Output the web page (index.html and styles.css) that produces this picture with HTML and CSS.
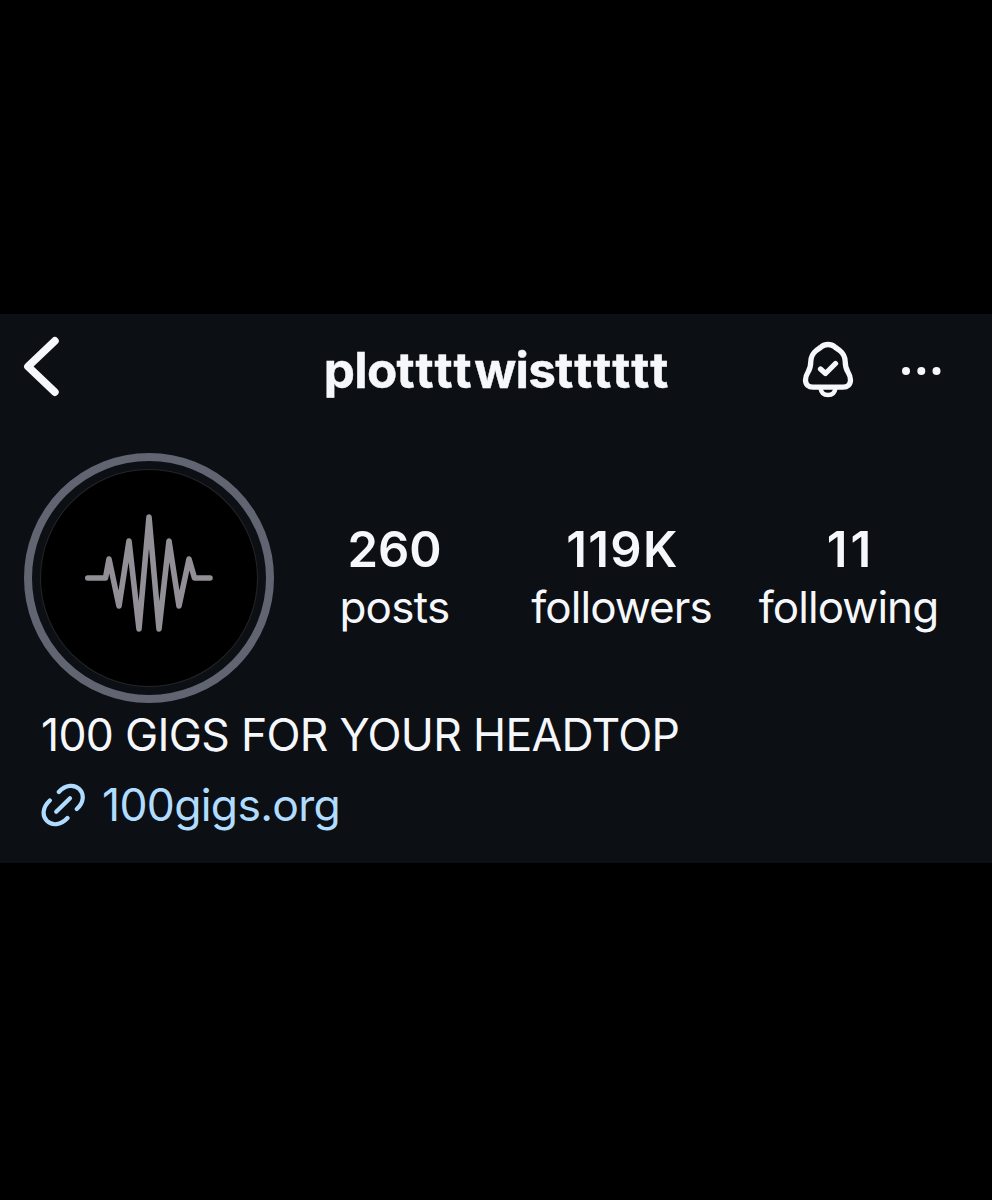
FILE: index.html
```html
<!DOCTYPE html>
<html lang="en">
<head>
<meta charset="utf-8">
<title>plottttwistttttt</title>
<link rel="stylesheet" href="styles.css">
</head>
<body>
<main class="profile">
  <header class="topbar">
    <svg class="back" width="60" height="70" viewBox="0 0 60 70" fill="none" stroke="currentColor" stroke-width="7.800" stroke-linecap="round" stroke-linejoin="round"><path d="M54.800 10 28 35.500 54.800 61"/></svg>
    <h1 class="username">plo<span class="wide">tttt</span>wis<span class="wide">tttttt</span></h1>
    <div class="actions">
      <svg class="bell" width="52" height="58" viewBox="0 0 52 58" fill="none" stroke="currentColor" stroke-width="5.300" stroke-linecap="round" stroke-linejoin="round">
        <path d="M26 3.500C23 3.500 21 4.400 19 6.100C17.500 7.300 15.500 8.400 14 9.700C10.500 12.500 9 16 8.800 20.500C8.700 25 8.300 27.500 6.300 30.500C4.500 33.500 3.500 35.500 3.500 39C3.500 43.500 6.500 46.200 11 46.200H41C45.500 46.200 48.500 43.500 48.500 39C48.500 35.500 47.500 33.500 45.700 30.500C43.700 27.500 43.300 25 43.200 20.500C43 16 41.500 12.500 38 9.700C36.500 8.400 34.500 7.300 33 6.100C31 4.400 29 3.500 26 3.500Z"/>
        <path d="M18.500 28 23.500 32.500 33.500 22.500"/>
        <path d="M18.600 47.500C19.200 51.800 22.200 54 26 54S32.800 51.800 33.400 47.500" stroke-width="4.500"/>
      </svg>
      <svg class="more" width="42" height="12" viewBox="0 0 42 12" fill="currentColor"><circle cx="6" cy="6" r="4"/><circle cx="21.300" cy="6" r="4"/><circle cx="36.500" cy="6" r="4"/></svg>
    </div>
  </header>

  <section class="summary">
    <div class="avatar">
      <svg class="wave" width="216" height="216" viewBox="0 0 216 216" fill="none" stroke="currentColor" stroke-width="5.600" stroke-linecap="round" stroke-linejoin="round"><path d="M46.800 108H64.500L68 89 78 136 88 71 98 159 108 47 118 159 128 71 138 136 148 89 153.500 108H169"/></svg>
    </div>
    <dl class="stats">
      <div class="stat"><dt class="count">260</dt><dd class="label label-short">posts</dd></div>
      <div class="stat"><dt class="count spaced">119K</dt><dd class="label">followers</dd></div>
      <div class="stat"><dt class="count spaced-more">11</dt><dd class="label">following</dd></div>
    </dl>
  </section>

  <section class="about">
    <p class="bio">100 GIGS FOR YOUR HEADTOP</p>
    <a class="link">
      <svg width="44" height="44" viewBox="0 0 44 44" fill="none" stroke="currentColor" stroke-width="4.200" stroke-linecap="round"><path d="M17.800 9C24.500 1.500 33.500 1.200 38.300 6C43.500 11.200 43 19.500 35.800 26"/><path d="M8.800 17.500C1.300 24.500 1 33 5.800 37.800C11 43 19.500 42.500 26.500 35"/><path d="M15.200 28.800 29 15.200"/></svg>
      <span>100gigs.org</span>
    </a>
  </section>
</main>
</body>
</html>
```
FILE: styles.css
```css
* {
  box-sizing: border-box;
  margin: 0;
  padding: 0;
}

body {
  min-height: 1200px;
  padding-top: 314px;
  background: #000;
  color: #f5f7fb;
  font-family: Inter, "Liberation Sans", sans-serif;
}

svg {
  display: block;
  flex: none;
}

.profile {
  height: 549px;
  background: #0c0f14;
}

.topbar {
  display: grid;
  grid-template-columns: 190px 1fr 190px;
  align-items: center;
  height: 139px;
  padding-bottom: 27px;
}

.back {
  margin-top: -9px;
}

.username {
  padding-left: 3px;
  font-size: 49.5px;
  font-weight: 700;
  line-height: 60px;
  letter-spacing: -0.8px;
  text-align: center;
  white-space: nowrap;
  -webkit-text-stroke: 0.4px currentColor;
}

.wide {
  letter-spacing: 2.65px;
}

.actions {
  display: flex;
  align-items: center;
  gap: 46px;
}

.more {
  margin-top: 2px;
}

.summary {
  display: flex;
  gap: 7px;
  height: 250px;
  padding-left: 24px;
}

.avatar {
  flex: none;
  display: grid;
  place-items: center;
  width: 250px;
  height: 250px;
  border: 8px solid #606571;
  border-radius: 50%;
}

.wave {
  border-radius: 50%;
  background: #000;
  color: #929096;
  box-shadow: 0 0 0 1px #242527;
}

.stats {
  display: grid;
  grid-template-columns: repeat(3, 227px);
  align-content: center;
  text-align: center;
}

.count {
  font-size: 49px;
  font-weight: 600;
  line-height: 58px;
}

.spaced {
  padding-left: 2px;
  letter-spacing: 1.3px;
}

.spaced-more {
  padding-left: 4px;
  letter-spacing: 3px;
}

.label {
  font-size: 44px;
  line-height: 56px;
  letter-spacing: -0.95px;
}

.label-short {
  letter-spacing: -0.7px;
}

.about {
  display: grid;
  gap: 8px;
  padding: 1px 0 0 41px;
}

.bio,
.link {
  font-size: 44.5px;
  line-height: 62px;
  letter-spacing: -0.7px;
  white-space: nowrap;
}

.link {
  display: flex;
  align-items: center;
  gap: 17px;
  color: #b0dcff;
}
```
